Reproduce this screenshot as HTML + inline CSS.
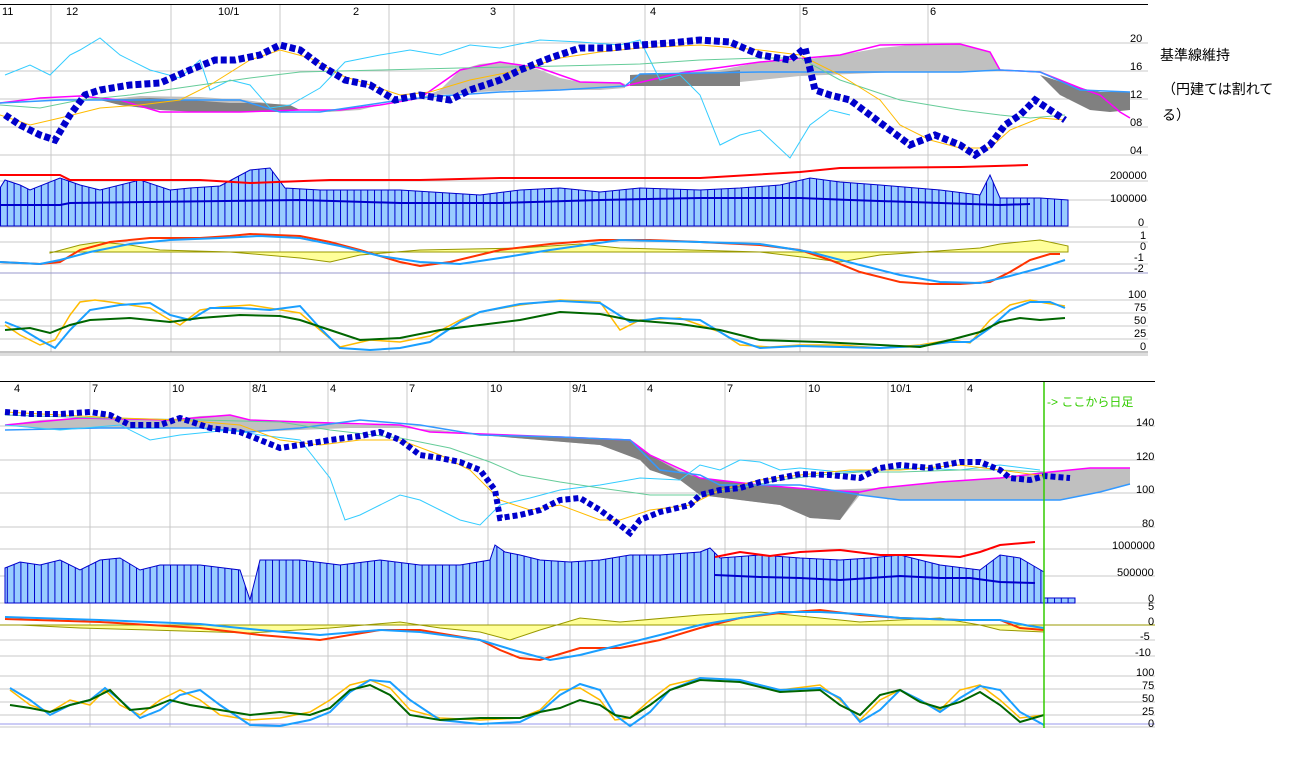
<!DOCTYPE html>
<html><head><meta charset="utf-8"><style>
html,body{margin:0;padding:0;background:#fff;width:1316px;height:768px;overflow:hidden}
svg{position:absolute;left:0;top:0}
text{font-family:"Liberation Sans","Noto Sans CJK JP",sans-serif;font-size:11px;fill:#000}
.note{position:absolute;font-family:"Liberation Sans","Noto Sans CJK JP",sans-serif;font-size:14px;color:#000;line-height:26px}
</style></head><body>
<svg width="1316" height="768" viewBox="0 0 1316 768">
<defs>
<pattern id="vb" x="0" y="0" width="6.8" height="10" patternUnits="userSpaceOnUse">
<rect x="0" y="0" width="6.8" height="10" fill="#99ccff"/><rect x="0" y="0" width="1" height="10" fill="#0000cc"/></pattern>
</defs>
<!-- TOP CHART -->
<line x1="0" y1="4.5" x2="1148" y2="4.5" stroke="#000"/>
<g stroke="#c8c8c8" stroke-width="1">
<line x1="51" y1="5" x2="51" y2="352"/><line x1="171" y1="5" x2="171" y2="352"/><line x1="280" y1="5" x2="280" y2="352"/>
<line x1="389" y1="5" x2="389" y2="352"/><line x1="514" y1="5" x2="514" y2="352"/><line x1="645" y1="5" x2="645" y2="352"/>
<line x1="800" y1="5" x2="800" y2="352"/><line x1="928" y1="5" x2="928" y2="352"/>
<line x1="0" y1="43" x2="1148" y2="43"/><line x1="0" y1="71" x2="1148" y2="71"/><line x1="0" y1="99" x2="1148" y2="99"/>
<line x1="0" y1="127" x2="1148" y2="127"/><line x1="0" y1="155" x2="1148" y2="155"/><line x1="0" y1="181" x2="1148" y2="181"/>
<line x1="0" y1="200" x2="1148" y2="200"/><line x1="0" y1="227" x2="1148" y2="227"/>
<line x1="0" y1="242" x2="1148" y2="242"/><line x1="0" y1="264" x2="1148" y2="264"/>
<line x1="0" y1="300" x2="1148" y2="300"/><line x1="0" y1="313" x2="1148" y2="313"/><line x1="0" y1="326" x2="1148" y2="326"/><line x1="0" y1="339" x2="1148" y2="339"/>
</g>
<line x1="0" y1="273" x2="1148" y2="273" stroke="#9999cc"/>
<line x1="0" y1="352" x2="1148" y2="352" stroke="#888"/>
<rect x="0" y="353" width="1148" height="3" fill="#ddd"/>
<g>
<text x="2" y="15">11</text><text x="66" y="15">12</text><text x="218" y="15">10/1</text><text x="353" y="15">2</text>
<text x="490" y="15">3</text><text x="650" y="15">4</text><text x="802" y="15">5</text><text x="930" y="15">6</text>
<text x="1130" y="42">20</text><text x="1130" y="70">16</text><text x="1130" y="98">12</text><text x="1130" y="126">08</text><text x="1130" y="154">04</text>
<text x="1110" y="179">200000</text><text x="1110" y="202">100000</text><text x="1138" y="226">0</text>
<text x="1140" y="239">1</text><text x="1140" y="250">0</text><text x="1134" y="261">-1</text><text x="1134" y="272">-2</text>
<text x="1128" y="298">100</text><text x="1134" y="311">75</text><text x="1134" y="324">50</text><text x="1134" y="337">25</text><text x="1140" y="350">0</text>
</g>
<!-- clouds top -->
<polygon points="100,100 140,96 200,97 245,100 280,105 300,110 330,112 360,110 380,105 400,100 420,98 440,90 460,70 480,64 500,62 520,64 540,70 560,78 580,82 600,83 620,82 625,84 625,88 600,90 560,90 520,90 480,92 440,95 410,100 380,105 350,108 320,110 300,110 280,112 260,112 240,112 200,112 160,110 120,105" fill="#c0c0c0"/>
<polygon points="100,100 120,105 160,110 200,112 240,112 280,112 300,110 290,105 260,103 230,103 190,100 150,98" fill="#808080"/>
<polygon points="630,75 680,73 720,70 760,62 800,60 840,55 880,48 920,44 960,44 990,52 1000,70 960,72 900,72 850,74 800,76 760,80 720,84 680,86 640,86" fill="#c0c0c0"/>
<polygon points="630,75 680,73 720,72 740,70 740,86 700,86 660,86 630,86" fill="#808080"/>
<polygon points="1040,75 1080,88 1100,92 1130,92 1130,110 1110,112 1090,110 1060,95" fill="#808080"/>
<polyline points="0,103 40,98 80,96 120,100 160,112 200,112 240,112 300,110 340,110 380,105 420,98 460,70 500,62 540,68 580,82 620,83 625,86 680,73 760,62 840,55 880,45 960,44 990,52 1000,70 1040,72 1080,88 1100,95 1120,112 1130,118" fill="none" stroke="#ff00ff" stroke-width="1.5"/>
<polyline points="0,103 60,100 120,100 240,100 280,112 320,112 400,100 440,96 500,92 560,90 625,86 640,74 760,72 960,72 1000,70 1040,72 1080,90 1130,92" fill="none" stroke="#3399ff" stroke-width="1.5"/>
<polyline points="5,75 30,65 50,75 70,55 80,50 100,38 120,55 150,70 180,78 200,60 210,90 230,80 250,85 270,108 290,105 320,88 345,62 380,55 410,50 440,55 470,45 500,48 540,40 580,42 620,45 640,40 660,80 680,75 700,95 720,145 740,135 760,130 790,158 810,125 830,110 850,115" fill="none" stroke="#33ccff" stroke-width="1"/>
<polyline points="0,105 40,108 80,100 130,95 200,85 250,78 300,72 380,70 460,68 560,66 640,64 700,60 760,58 800,58 840,80 900,100 960,110 1000,115 1030,118 1065,115" fill="none" stroke="#66cc99" stroke-width="1"/>
<polyline points="0,115 30,125 60,118 100,108 140,105 180,100 210,85 250,60 280,50 310,58 340,75 370,85 400,95 430,92 470,80 520,70 560,58 600,52 640,48 700,45 760,50 800,55 840,75 880,100 900,125 930,140 960,148 990,148 1010,130 1040,118 1065,120" fill="none" stroke="#ffbb00" stroke-width="1"/>
<polyline points="5,115 20,125 40,135 55,140 70,115 85,95 100,90 130,85 160,83 190,70 215,60 235,60 260,55 280,45 300,50 320,65 345,80 370,85 395,100 420,95 450,100 470,90 500,80 520,70 550,58 580,48 610,48 640,45 670,43 700,40 730,42 760,55 790,60 805,48 815,90 830,95 850,100 870,115 890,130 910,145 935,135 960,145 975,155 990,145 1005,125 1020,115 1035,100 1050,110 1065,120" fill="none" stroke="#0000cc" stroke-width="7" stroke-dasharray="6 3"/>
<!-- top volume -->
<polygon points="0,188 5,180 20,185 30,190 60,178 80,185 100,190 140,180 170,190 190,188 220,186 250,170 270,168 285,188 320,190 400,190 480,195 520,190 560,188 600,192 640,188 700,190 740,188 780,185 810,178 840,182 880,185 940,190 980,195 990,175 1000,198 1040,198 1068,200 1068,226 0,226" fill="url(#vb)" stroke="#0000cc"/>
<polyline points="0,175 60,175 70,180 200,180 250,183 330,180 420,180 500,178 560,178 700,178 800,172 840,168 960,167 1028,165" fill="none" stroke="#ff0000" stroke-width="2"/>
<polyline points="0,205 60,205 70,203 300,200 400,203 500,203 600,200 700,198 800,198 850,200 1000,205 1030,204" fill="none" stroke="#0000cc" stroke-width="2"/>
<!-- top macd -->
<polygon points="50,253 80,245 100,242 130,245 160,250 230,252 300,258 330,262 360,255 420,250 520,248 580,244 620,248 760,252 810,258 840,262 880,255 980,248 1000,244 1040,240 1068,246 1068,252 50,252" fill="#ffff99" stroke="#999900"/>
<polyline points="0,262 40,264 60,262 80,250 110,242 150,238 200,238 230,236 250,234 300,236 330,242 360,250 400,262 420,266 450,262 500,250 550,244 600,240 650,240 700,242 760,245 800,250 830,260 860,272 900,282 930,284 960,284 990,282 1010,272 1030,260 1050,254 1060,254" fill="none" stroke="#ff3300" stroke-width="2"/>
<polyline points="0,262 40,264 60,260 90,252 130,244 170,240 220,238 260,236 300,238 340,246 380,256 420,262 460,264 500,258 550,250 620,240 700,242 760,244 810,252 860,265 900,275 940,282 980,283 1010,276 1040,268 1065,260" fill="none" stroke="#1a9fff" stroke-width="2"/>
<!-- top stoch -->
<polyline points="5,325 20,335 40,345 55,340 70,315 80,302 95,300 110,302 130,305 150,308 170,320 180,325 200,310 220,307 250,305 300,313 320,330 340,347 370,340 400,342 430,336 460,320 480,312 520,305 560,300 600,302 620,330 640,320 680,318 700,325 720,332 740,345 770,347 800,345 840,345 880,348 920,345 950,340 970,343 990,320 1010,305 1030,300 1045,303 1065,306" fill="none" stroke="#ffbb00" stroke-width="1.5"/>
<polyline points="5,322 20,328 40,340 55,348 70,330 90,310 120,305 150,303 170,315 190,320 210,308 240,308 270,310 300,306 320,328 340,348 370,350 400,348 430,342 460,322 480,312 520,304 560,301 600,303 630,322 660,318 700,320 730,338 760,348 800,346 840,347 880,348 920,346 950,342 970,342 990,328 1010,310 1030,302 1050,302 1065,308" fill="none" stroke="#1a9fff" stroke-width="2"/>
<polyline points="5,330 30,328 50,333 70,325 90,320 130,318 170,322 200,318 240,315 280,316 300,320 330,330 360,340 400,338 440,330 480,325 520,320 560,312 600,314 630,320 680,324 720,330 760,340 820,342 880,345 920,347 950,340 980,332 1000,322 1020,318 1040,320 1065,318" fill="none" stroke="#006600" stroke-width="2"/>

<!-- BOTTOM CHART -->
<line x1="0" y1="381.5" x2="1155" y2="381.5" stroke="#000"/>
<g stroke="#c8c8c8" stroke-width="1">
<line x1="90" y1="382" x2="90" y2="727"/><line x1="170" y1="382" x2="170" y2="727"/><line x1="250" y1="382" x2="250" y2="727"/>
<line x1="328" y1="382" x2="328" y2="727"/><line x1="407" y1="382" x2="407" y2="727"/><line x1="488" y1="382" x2="488" y2="727"/>
<line x1="570" y1="382" x2="570" y2="727"/><line x1="645" y1="382" x2="645" y2="727"/><line x1="725" y1="382" x2="725" y2="727"/>
<line x1="806" y1="382" x2="806" y2="727"/><line x1="888" y1="382" x2="888" y2="727"/><line x1="965" y1="382" x2="965" y2="727"/>
<line x1="0" y1="426" x2="1155" y2="426"/><line x1="0" y1="460" x2="1155" y2="460"/><line x1="0" y1="493" x2="1155" y2="493"/>
<line x1="0" y1="527" x2="1155" y2="527"/><line x1="0" y1="549" x2="1155" y2="549"/><line x1="0" y1="576" x2="1155" y2="576"/>
<line x1="0" y1="603" x2="1155" y2="603"/><line x1="0" y1="640" x2="1155" y2="640"/><line x1="0" y1="656" x2="1155" y2="656"/>
<line x1="0" y1="676" x2="1155" y2="676"/><line x1="0" y1="689" x2="1155" y2="689"/><line x1="0" y1="702" x2="1155" y2="702"/>
<line x1="0" y1="715" x2="1155" y2="715"/><line x1="0" y1="727" x2="1155" y2="727"/>
</g>
<line x1="0" y1="625" x2="1155" y2="625" stroke="#999900"/>
<line x1="0" y1="724" x2="1155" y2="724" stroke="#9999ee"/>
<g>
<text x="14" y="392">4</text><text x="92" y="392">7</text><text x="172" y="392">10</text><text x="252" y="392">8/1</text>
<text x="330" y="392">4</text><text x="409" y="392">7</text><text x="490" y="392">10</text><text x="572" y="392">9/1</text>
<text x="647" y="392">4</text><text x="727" y="392">7</text><text x="808" y="392">10</text><text x="890" y="392">10/1</text><text x="967" y="392">4</text>
<text x="1136" y="426">140</text><text x="1136" y="460">120</text><text x="1136" y="493">100</text><text x="1142" y="527">80</text>
<text x="1112" y="549">1000000</text><text x="1117" y="576">500000</text><text x="1148" y="602">0</text><text x="1148" y="610">5</text>
<text x="1148" y="625">0</text><text x="1140" y="640">-5</text><text x="1135" y="656">-10</text>
<text x="1136" y="676">100</text><text x="1142" y="689">75</text><text x="1142" y="702">50</text><text x="1142" y="715">25</text><text x="1148" y="727">0</text>
<text x="1047" y="406" style="fill:#33cc00;font-size:12px">-&gt; ここから日足</text>
</g>
<!-- bottom cloud -->
<polygon points="5,425 40,420 80,418 120,418 170,420 200,416 230,415 250,420 300,422 360,425 400,425 430,432 480,435 560,437 630,440 650,455 680,470 700,478 760,485 820,490 880,488 940,482 1000,478 1050,472 1090,468 1130,468 1130,484 1100,492 1060,500 1000,500 900,500 860,495 840,520 810,518 780,505 740,500 700,495 680,480 650,470 640,460 600,445 540,440 480,435 440,430 400,428 350,428 300,430 250,432 200,428 150,428 100,428 50,430" fill="#c0c0c0"/>
<polygon points="430,432 480,435 560,437 630,440 650,455 680,472 700,478 760,485 820,490 860,492 840,520 810,518 780,505 740,500 700,495 680,480 650,470 640,460 600,445 540,440 480,435" fill="#808080"/>
<polyline points="5,425 80,418 170,420 230,415 250,420 300,422 400,425 430,432 560,437 630,440 650,455 700,478 760,485 820,490 860,492 880,488 940,482 1000,478 1050,472 1090,468 1130,468" fill="none" stroke="#ff00ff" stroke-width="1.5"/>
<polyline points="5,430 100,428 200,428 250,432 300,428 360,420 420,425 480,435 560,437 630,440 660,470 700,475 720,485 800,485 860,495 900,500 1000,500 1060,500 1100,492 1130,484" fill="none" stroke="#3399ff" stroke-width="1.5"/>
<polyline points="5,425 60,430 120,425 150,440 180,435 230,430 260,435 300,440 330,478 345,520 360,515 380,505 400,495 420,500 440,510 460,520 480,525 500,505 530,498 560,490 600,485 640,478 680,480 700,465 720,470 740,460 760,462 780,470 800,468 840,472 880,470 920,468 960,470 1000,465 1040,470" fill="none" stroke="#33ccff" stroke-width="1"/>
<polyline points="5,415 100,418 200,420 280,422 330,430 400,438 450,448 490,462 520,475 560,482 600,488 650,495 700,495 740,488 780,480 820,475 860,472 900,472 960,470 1000,470 1044,472" fill="none" stroke="#66cc99" stroke-width="1"/>
<polyline points="5,412 60,415 120,418 180,420 240,425 280,440 320,445 360,440 400,440 440,455 470,470 500,500 530,510 560,505 600,520 620,520 650,510 690,505 720,490 760,480 800,475 850,470 900,470 960,465 1000,470 1044,476" fill="none" stroke="#ffbb00" stroke-width="1"/>
<polyline points="5,412 30,414 60,414 90,412 110,415 130,425 160,425 180,418 210,428 240,432 260,440 280,448 300,445 330,440 360,436 380,432 400,440 420,455 440,458 460,462 480,470 495,490 500,518 520,515 540,510 560,500 580,498 600,510 620,525 630,533 640,520 660,512 690,505 700,495 720,490 740,488 760,482 780,478 800,474 830,475 860,478 880,468 900,465 930,468 960,462 980,462 1000,470 1010,478 1030,480 1045,476 1070,478" fill="none" stroke="#0000cc" stroke-width="6" stroke-dasharray="5 3"/>
<!-- bottom volume -->
<polygon points="5,568 20,562 40,565 60,560 80,570 100,560 120,558 140,570 160,565 200,565 240,570 250,600 260,560 300,560 340,565 380,560 420,565 460,565 490,560 495,545 505,552 520,555 540,560 570,562 600,560 630,555 660,555 700,552 710,548 720,558 760,555 800,558 840,560 870,558 900,555 940,565 980,570 1000,555 1020,558 1044,572 1044,598 1075,598 1075,603 5,603" fill="url(#vb)" stroke="#0000cc"/>
<polyline points="715,557 740,552 770,556 800,552 840,550 880,555 920,555 960,557 980,552 1000,545 1035,542" fill="none" stroke="#ff0000" stroke-width="2"/>
<polyline points="715,575 760,577 800,578 840,580 870,578 900,576 940,578 970,578 1000,582 1035,583" fill="none" stroke="#0000cc" stroke-width="2"/>
<!-- bottom macd -->
<polygon points="20,625 80,628 150,630 250,633 330,628 400,622 440,628 480,632 510,640 540,630 580,618 620,622 700,615 760,612 860,622 940,618 980,625 1000,630 1044,632 1044,625 20,625" fill="#ffff99" stroke="#999900"/>
<polyline points="5,619 100,622 200,628 260,635 320,640 380,630 420,630 480,640 500,650 520,658 540,660 580,648 620,648 660,640 700,628 740,618 780,613 820,610 860,615 900,618 960,620 1000,620 1020,628 1044,630" fill="none" stroke="#ff3300" stroke-width="2"/>
<polyline points="5,617 100,620 200,624 260,630 320,635 380,630 420,632 480,640 520,652 550,660 580,655 620,645 660,635 700,625 740,618 780,612 820,612 860,614 900,618 960,620 1000,620 1030,626 1044,628" fill="none" stroke="#1a9fff" stroke-width="2"/>
<!-- bottom stoch -->
<polyline points="10,690 30,705 50,712 70,700 90,705 105,690 120,705 140,715 160,700 180,690 200,700 220,715 250,720 280,718 310,712 330,700 350,685 370,680 390,688 410,710 440,718 480,720 520,718 540,710 560,690 580,688 600,700 615,720 630,718 650,700 670,685 700,678 740,680 780,690 820,685 840,700 860,720 880,700 900,690 920,700 940,710 960,690 980,685 1000,700 1020,718 1044,715" fill="none" stroke="#ffbb00" stroke-width="1.5"/>
<polyline points="10,688 30,700 50,715 70,705 90,700 105,688 120,700 140,718 160,710 180,695 200,690 220,705 250,725 280,726 310,720 330,712 350,692 370,680 390,682 410,700 440,720 480,724 520,722 540,712 560,695 580,684 600,690 615,715 630,726 650,712 670,690 700,678 740,680 780,690 820,688 840,698 860,722 880,710 900,690 920,700 940,712 960,698 980,686 1000,690 1020,712 1044,725" fill="none" stroke="#1a9fff" stroke-width="2"/>
<polyline points="10,705 30,708 50,712 70,705 90,700 110,690 130,710 150,708 170,700 190,705 220,710 250,715 280,712 310,715 330,708 350,690 370,685 390,695 410,715 440,720 480,718 520,718 540,712 560,708 580,700 600,705 615,715 630,718 650,705 670,690 700,680 740,682 780,692 820,690 840,705 860,715 880,695 900,690 920,702 940,708 960,702 980,692 1000,705 1020,722 1044,715" fill="none" stroke="#006600" stroke-width="2"/>
<line x1="1044" y1="382" x2="1044" y2="728" stroke="#33cc00" stroke-width="1.5"/>
</svg>
<div class="note" style="left:1160px;top:42px">基準線維持</div>
<div class="note" style="left:1162px;top:76px">（円建ては割れて<br>る）</div>
</body></html>
